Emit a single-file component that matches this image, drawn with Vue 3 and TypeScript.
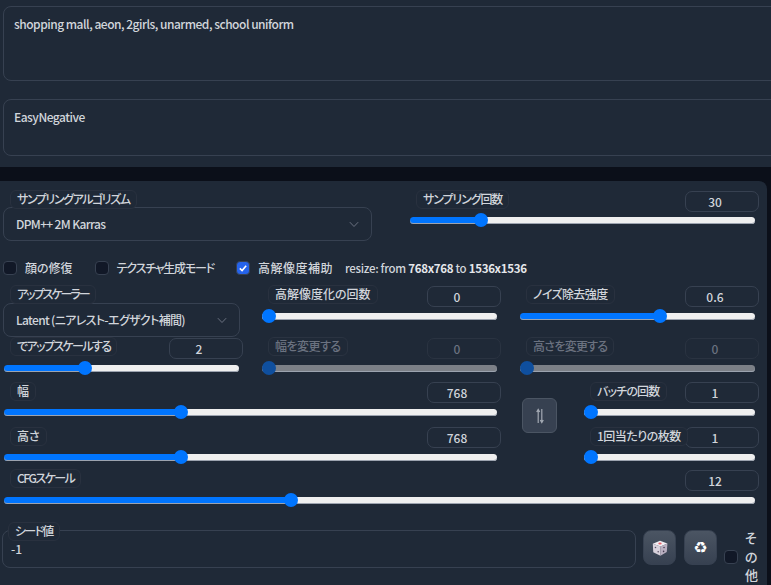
<script setup lang="ts">
interface Field {
  label: string
  value: number
  min: number
  max: number
  tight: number
  disabled?: boolean
}

const pct = (f: Field) => ({ '--pct': `${((f.value - f.min) / (f.max - f.min)) * 100}%` })
const track = (n: number) => ({ letterSpacing: `${n}px` })

const steps: Field = { label: 'サンプリング回数', value: 30, min: 1, max: 150, tight: -1.1 }

const hiresTop: Field[] = [
  { label: '高解像度化の回数', value: 0, min: 0, max: 150, tight: 0 },
  { label: 'ノイズ除去強度', value: 0.6, min: 0, max: 1, tight: -0.6 },
]
const hiresBottom: Field[] = [
  { label: 'でアップスケールする', value: 2, min: 1, max: 4, tight: -1.6 },
  { label: '幅を変更する', value: 0, min: 0, max: 2048, tight: -0.5, disabled: true },
  { label: '高さを変更する', value: 0, min: 0, max: 2048, tight: -0.7, disabled: true },
]
const dims: Field[] = [
  { label: '幅', value: 768, min: 64, max: 2048, tight: 0 },
  { label: '高さ', value: 768, min: 64, max: 2048, tight: 0 },
]
const batch: Field[] = [
  { label: 'バッチの回数', value: 1, min: 1, max: 100, tight: -0.8 },
  { label: '1回当たりの枚数', value: 1, min: 1, max: 8, tight: -0.5 },
]
const cfg: Field = { label: 'CFGスケール', value: 12, min: 1, max: 30, tight: -1.5 }
const checks = [
  { label: '顔の修復', checked: false, tight: 0 },
  { label: 'テクスチャ生成モード', checked: false, tight: -1.2 },
  { label: '高解像度補助', checked: true, tight: 0.5 },
]
</script>

<template>
  <div class="page">
    <section class="prompts">
      <div class="prompt prompt-main">shopping mall, aeon, 2girls, unarmed, school uniform</div>
      <div class="prompt prompt-neg">EasyNegative</div>
    </section>

    <section class="panel">
      <div class="row-sampling">
        <div class="select-field sampler">
          <span class="chip" :style="track(-1.4)">サンプリングアルゴリズム</span>
          <div class="select">
            <span>DPM++ 2M Karras</span>
            <svg class="chev" viewBox="0 0 12 8" width="10" height="7"><path d="M1 1.2 6 6.4 11 1.2" fill="none" stroke="#6b7280" stroke-width="1.2" /></svg>
          </div>
        </div>
        <div class="field steps">
          <div class="head">
            <span class="chip" :style="track(steps.tight)">{{ steps.label }}</span>
            <span class="num">{{ steps.value }}</span>
          </div>
          <input class="range" type="range" :min="steps.min" :max="steps.max" :value="steps.value" :style="pct(steps)" />
        </div>
      </div>

      <div class="checks">
        <label v-for="c in checks" :key="c.label" class="check">
          <span class="box" :class="{ on: c.checked }">
            <svg v-if="c.checked" viewBox="0 0 12 12" width="10" height="10"><path d="M2.2 6.4 4.9 9 9.8 3.2" fill="none" stroke="#fff" stroke-width="1.9" /></svg>
          </span>
          <span :style="track(c.tight)">{{ c.label }}</span>
        </label>
        <span class="resize">resize: from <b>768x768</b> to <b>1536x1536</b></span>
      </div>

      <div class="hires">
        <div class="select-field upscaler">
          <span class="chip" :style="track(-2)">アップスケーラー</span>
          <div class="select">
            <span>Latent (ニアレスト-エグザクト補間)</span>
            <svg class="chev" viewBox="0 0 12 8" width="10" height="7"><path d="M1 1.2 6 6.4 11 1.2" fill="none" stroke="#6b7280" stroke-width="1.2" /></svg>
          </div>
        </div>
        <div v-for="f in hiresTop" :key="f.label" class="field">
          <div class="head">
            <span class="chip" :style="track(f.tight)">{{ f.label }}</span>
            <span class="num">{{ f.value }}</span>
          </div>
          <input class="range" type="range" :min="f.min" :max="f.max" :step="f.max === 1 ? 0.01 : 1" :value="f.value" :style="pct(f)" />
        </div>
        <div v-for="f in hiresBottom" :key="f.label" class="field" :class="{ off: f.disabled }">
          <div class="head">
            <span class="chip" :style="track(f.tight)">{{ f.label }}</span>
            <span class="num">{{ f.value }}</span>
          </div>
          <input class="range" type="range" :min="f.min" :max="f.max" :value="f.value" :disabled="f.disabled" :style="pct(f)" />
        </div>
      </div>

      <div class="dims">
        <div class="dim-col">
          <div v-for="f in dims" :key="f.label" class="field">
            <div class="head">
              <span class="chip" :style="track(f.tight)">{{ f.label }}</span>
              <span class="num">{{ f.value }}</span>
            </div>
            <input class="range" type="range" :min="f.min" :max="f.max" :value="f.value" :style="pct(f)" />
          </div>
        </div>
        <button class="swap" type="button" aria-label="swap">
          <svg viewBox="0 0 12 16" width="12" height="16">
            <path d="M4.2 15V1.6M2.7 4 4.2 1.4 5.7 4M7.8 1V14.4M6.3 12 7.8 14.6 9.3 12" fill="none" stroke="#a3a9b3" stroke-width="1.2" />
          </svg>
        </button>
        <div class="dim-col batch">
          <div v-for="f in batch" :key="f.label" class="field">
            <div class="head">
              <span class="chip" :style="track(f.tight)">{{ f.label }}</span>
              <span class="num">{{ f.value }}</span>
            </div>
            <input class="range" type="range" :min="f.min" :max="f.max" :value="f.value" :style="pct(f)" />
          </div>
        </div>
      </div>

      <div class="field cfg">
        <div class="head">
          <span class="chip" :style="track(cfg.tight)">{{ cfg.label }}</span>
          <span class="num">{{ cfg.value }}</span>
        </div>
        <input class="range" type="range" :min="cfg.min" :max="cfg.max" :value="cfg.value" :style="pct(cfg)" />
      </div>

      <div class="seed-row">
        <div class="seed">
          <span class="chip seed-chip" :style="track(-1.7)">シード値</span>
          <div class="seed-input">-1</div>
        </div>
        <button class="tool" type="button" aria-label="dice">
          <svg viewBox="0 0 16 16" width="18" height="18">
            <path d="M8 1.6 14.6 4 8.4 6.6 1.6 4.2Z" fill="#f1edf1" />
            <path d="M1.6 4.2 8.4 6.6V14.8L2 11.8Z" fill="#d9d2dc" />
            <path d="M8.4 6.6 14.6 4 14 11.6 8.4 14.8Z" fill="#b9afc0" />
            <ellipse cx="8" cy="4" rx="1.5" ry=".8" fill="#e5636b" />
            <circle cx="4" cy="7.6" r=".7" fill="#5b5166" />
            <circle cx="6.4" cy="11.4" r=".7" fill="#5b5166" />
            <circle cx="11.6" cy="7.6" r=".7" fill="#453c50" />
            <circle cx="11.2" cy="11" r=".7" fill="#453c50" />
          </svg>
        </button>
        <button class="tool recycle" type="button" aria-label="reuse">♻</button>
        <label class="other">
          <span class="box"></span>
          <span class="other-text">その他</span>
        </label>
      </div>
    </section>
  </div>
</template>

<style>
html,
body {
  margin: 0;
  background: #0b0f19;
}
</style>

<style scoped>
.page {
  width: 771px;
  height: 585px;
  overflow: hidden;
  background: #0b0f19;
  color: #d1d5db;
  font-family: "Noto Sans CJK JP", "Noto Sans", sans-serif;
  font-feature-settings: "palt";
  font-size: 12px;
  font-weight: 500;
  line-height: 16px;
}
.prompts {
  height: 167px;
  box-sizing: border-box;
  background: #1f2937;
  padding: 6px 0 0 3px;
  display: flex;
  flex-direction: column;
  gap: 18px;
  overflow: hidden;
}
.prompt {
  box-sizing: border-box;
  width: 790px;
  border: 1px solid #374151;
  border-radius: 8px;
  padding: 9px 10px;
  font-size: 12px;
  letter-spacing: -0.5px;
}
.prompt-main {
  height: 75px;
}
.prompt-neg {
  height: 57px;
}
.panel {
  margin: 14px 4px 0 0;
  height: 404px;
  box-sizing: border-box;
  background: #1f2937;
  border-radius: 0 8px 0 0;
  padding: 9px 8px 0 3px;
}
.chip {
  display: inline-block;
  box-sizing: border-box;
  height: 19px;
  line-height: 16px;
  padding: 0 6px;
  margin-left: 7px;
  border: 1px solid #29313f;
  border-radius: 6px;
  background: #1f2937;
  color: #d1d5db;
  white-space: nowrap;
  position: relative;
  z-index: 1;
}
.head .chip {
  margin-right: -6px;
}
.select-field .chip {
  display: block;
  width: fit-content;
  margin-bottom: -2px;
}
.upscaler .chip {
  margin-bottom: -1px;
}
.select {
  box-sizing: border-box;
  height: 34px;
  border: 1px solid #374151;
  border-radius: 8px;
  padding: 0 12px;
  display: flex;
  align-items: center;
  justify-content: space-between;
  letter-spacing: -0.65px;
}
.row-sampling {
  display: flex;
  justify-content: space-between;
  height: 59px;
}
.sampler {
  width: 369px;
}
.steps {
  width: 350px;
}
.steps .range {
  margin-top: 1px;
}
.upscaler {
  width: 237px;
}
.field {
  min-width: 0;
}
.head {
  display: flex;
  justify-content: space-between;
  align-items: flex-start;
}
.num {
  box-sizing: border-box;
  width: 74px;
  height: 21px;
  line-height: 19px;
  margin-top: 1px;
  padding-right: 14px;
  border: 1px solid #374151;
  border-radius: 7px;
  text-align: center;
  flex: none;
}
.range {
  -webkit-appearance: none;
  appearance: none;
  display: block;
  box-sizing: border-box;
  width: calc(100% - 5px);
  height: 14px;
  margin: 2px 0 0 1px;
  padding: 0;
  background: transparent;
}
.range::-webkit-slider-runnable-track {
  height: 7px;
  border-radius: 4px;
  box-sizing: border-box;
  box-shadow: inset 0 -1px 0 #9ca3af;
  background: linear-gradient(to right, #0075ff var(--pct), #efefef var(--pct));
}
.range::-webkit-slider-thumb {
  -webkit-appearance: none;
  width: 14px;
  height: 14px;
  margin-top: -3.5px;
  border-radius: 50%;
  background: #0075ff;
  border: 0;
}
.off .chip,
.off .num {
  color: #6b7280;
  border-color: #2a3341;
}
.off .range::-webkit-slider-runnable-track {
  background: #7c8087;
}
.off .range::-webkit-slider-thumb {
  background: #0f4f9e;
}
.checks {
  display: flex;
  align-items: center;
  height: 20px;
  margin-top: 9px;
}
.check {
  display: flex;
  align-items: center;
  gap: 8px;
  margin-right: 22px;
}
.box {
  box-sizing: border-box;
  width: 14px;
  height: 14px;
  flex: none;
  border: 1px solid #374151;
  border-radius: 4px;
  background: #111827;
  display: flex;
  align-items: center;
  justify-content: center;
}
.box.on {
  background: #2563eb;
}
.resize {
  font-size: 11.5px;
  margin-left: -10px;
  letter-spacing: -0.3px;
}
.resize b {
  font-weight: 700;
  color: #e5e7eb;
}
.hires {
  display: grid;
  grid-template-columns: repeat(3, 240px);
  column-gap: 18px;
  margin-top: 7px;
}
.hires .field {
  height: 52px;
}
.dims {
  display: flex;
  align-items: flex-start;
  margin-top: -7px;
}
.dims .num {
  margin-top: 0;
}
.dim-col {
  width: 498px;
  display: flex;
  flex-direction: column;
  gap: 8px;
}
.dim-col.batch {
  width: 176px;
}
.swap {
  box-sizing: border-box;
  width: 35px;
  height: 35px;
  margin: 16px 26px 0 21px;
  padding: 0;
  border: 1px solid #4b5563;
  border-radius: 6px;
  background: #374151;
  display: flex;
  align-items: center;
  justify-content: center;
}
.cfg {
  margin-top: 5px;
}
.seed-row {
  display: flex;
  align-items: flex-start;
  margin-top: 15px;
}
.seed {
  position: relative;
  width: 634px;
  margin-left: -1px;
  padding-top: 8px;
}
.seed-chip {
  position: absolute;
  top: 0;
  left: -1px;
}
.seed-input {
  box-sizing: border-box;
  height: 38px;
  border: 1px solid #374151;
  border-radius: 8px;
  padding: 10px 8px 0;
  font-size: 12px;
  line-height: 16px;
}
.tool {
  box-sizing: border-box;
  width: 33px;
  height: 35px;
  margin: 8px 0 0 7px;
  padding: 0;
  border: 1px solid #374151;
  border-radius: 8px;
  background: linear-gradient(to bottom, #4b5563, #374151);
  display: flex;
  align-items: center;
  justify-content: center;
}
.tool + .tool {
  margin-left: 8px;
}
.recycle {
  color: #fff;
  font-family: "DejaVu Sans", sans-serif;
  font-size: 16px;
  font-weight: 700;
}
.other {
  display: flex;
  align-items: flex-start;
  gap: 7px;
  margin: 7px 0 0 7px;
}
.other .box {
  margin-top: 21px;
}
.other-text {
  width: 14px;
  line-height: 18.5px;
  font-size: 13px;
  word-break: break-all;
}
</style>
